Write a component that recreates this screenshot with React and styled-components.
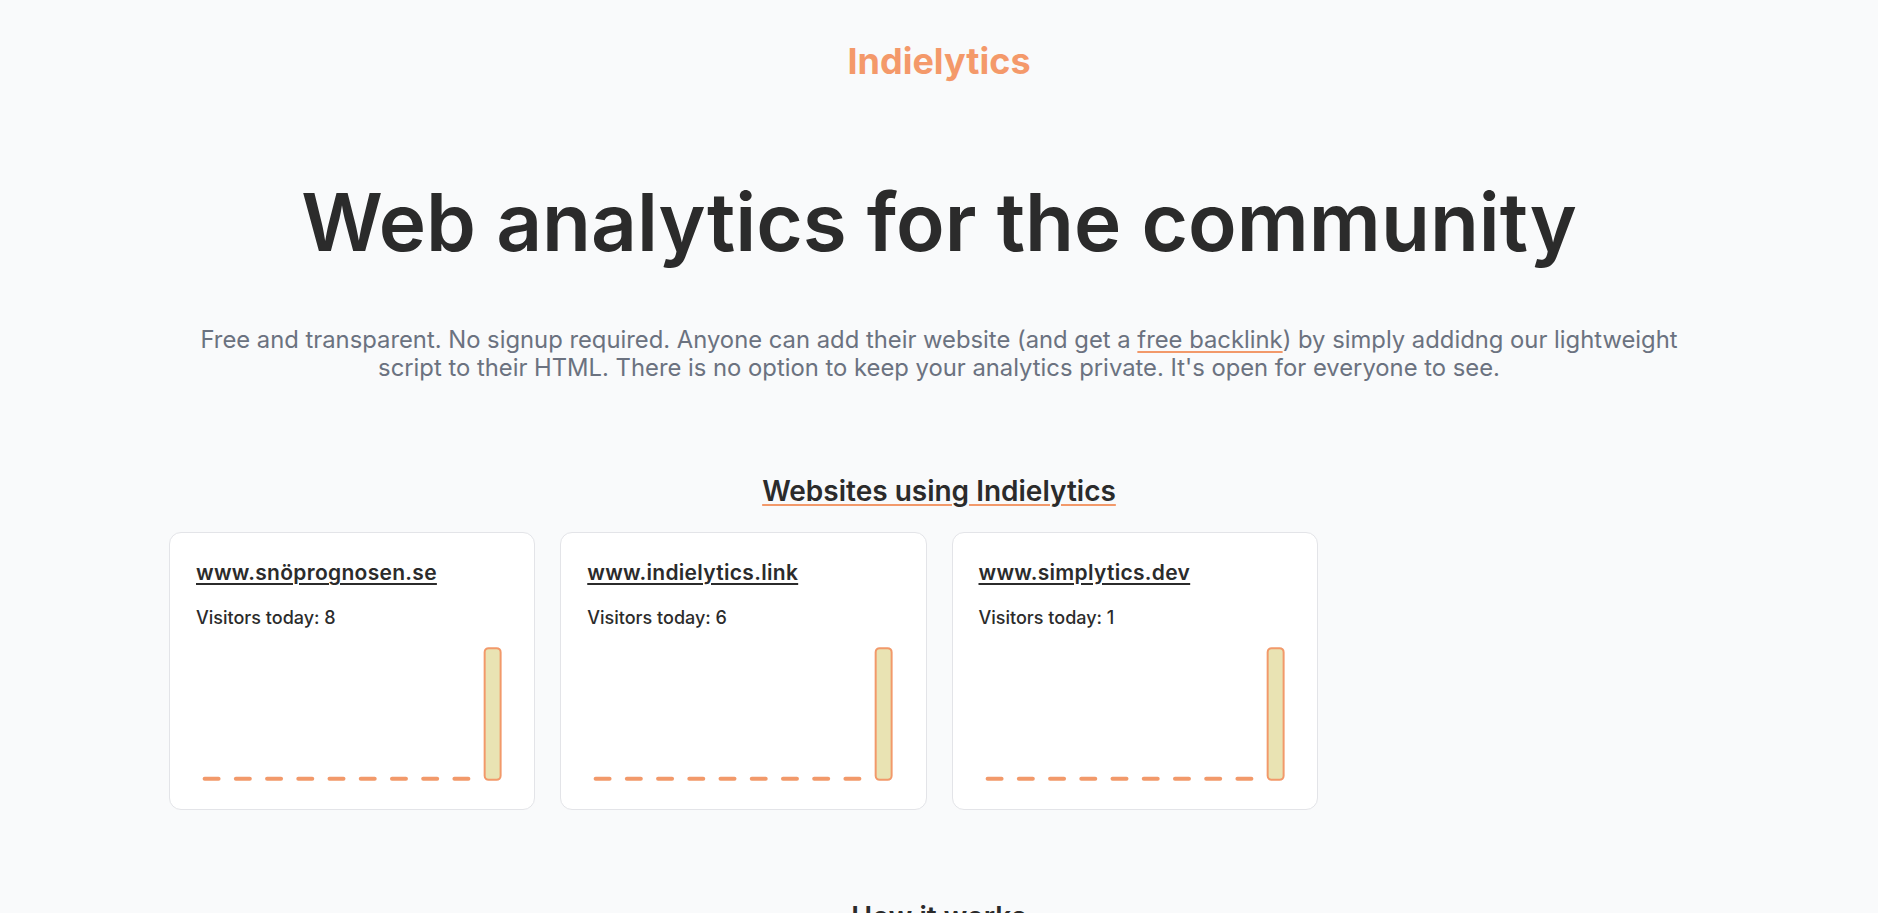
import React from 'react'
import styled, { createGlobalStyle } from 'styled-components'

const GlobalStyle = createGlobalStyle`
    * { box-sizing: border-box; }
    body{
        margin: 0;
        background: #f9fafb;
        font-family: Inter, "Noto Sans", sans-serif;
        color: #2b2b2b;
    }
`;

const sites = [
    { url: 'www.snöprognosen.se', visitors: 8, days: [0, 0, 0, 0, 0, 0, 0, 0, 0, 8] },
    { url: 'www.indielytics.link', visitors: 6, days: [0, 0, 0, 0, 0, 0, 0, 0, 0, 6] },
    { url: 'www.simplytics.dev', visitors: 1, days: [0, 0, 0, 0, 0, 0, 0, 0, 0, 1] },
]

function BarChart({ data }) {
    const w = 313
    const h = 136
    const slot = w / data.length
    const barW = 16
    const max = Math.max(...data, 1)
    return (
        <ChartSvg viewBox={`0 0 ${w} ${h}`} width={w} height={h}>
            {data.map((v, i) => {
                const x = i * slot + (slot - barW) / 2
                if (v === 0) {
                    return <rect key={i} x={x - 1} y={h - 6} width={barW + 2} height={4} rx={2} fill="#f2996a" />
                }
                const bh = (v / max) * (h - 4)
                return (
                    <rect key={i} x={x} y={h - 3 - bh} width={barW} height={bh} rx={4}
                        fill="#e9e3b3" stroke="#f2996a" strokeWidth={2} />
                )
            })}
        </ChartSvg>
    )
}

function App() {
    return (
        <>
            <GlobalStyle />
            <Page>
                <Header>
                    <Logo>Indielytics</Logo>
                </Header>
                <Hero>
                    <h1>Web analytics for the community</h1>
                    <p>
                        Free and transparent. No signup required. Anyone can add their website (and get a <a href="#">free backlink</a>) by simply addidng our lightweight script to their HTML. There is no option to keep your analytics private. It's open for everyone to see.
                    </p>
                </Hero>
                <Section>
                    <SectionTitle>Websites using Indielytics</SectionTitle>
                    <CardGrid>
                        {sites.map(site => (
                            <Card key={site.url}>
                                <SiteLink href="#">{site.url}</SiteLink>
                                <Visitors>Visitors today: {site.visitors}</Visitors>
                                <BarChart data={site.days} />
                            </Card>
                        ))}
                    </CardGrid>
                </Section>
                <Section>
                    <SectionTitle $plain>How it works</SectionTitle>
                </Section>
            </Page>
        </>
    )
}

const Page = styled.div`
    max-width: 1540px;
    margin: 0 auto;
    padding-bottom: 80px;
`;

const Header = styled.header`
    display: flex;
    justify-content: center;
    padding-top: 41px;
`;

const Logo = styled.div`
    font-size: 36px;
    line-height: 40px;
    font-weight: 700;
    color: #f4996a;
`;

const Hero = styled.section`
    text-align: center;
    h1{
        margin: 101px 0 0;
        font-size: 80px;
        line-height: 80px;
        font-weight: 600;
        color: #2b2b2b;
    }
    p{
        margin: 64px auto 0;
        max-width: 1500px;
        font-size: 23.8px;
        line-height: 28px;
        color: #6b7280;
        a{
            color: inherit;
            text-decoration: underline;
            text-decoration-color: #f2996a;
            text-decoration-thickness: 2px;
            text-underline-offset: 3px;
        }
    }
`;

const Section = styled.section`
    margin-top: 91px;
    & + &{
        margin-top: 89px;
    }
`;

const SectionTitle = styled.h2`
    margin: 0 0 23px;
    text-align: center;
    font-size: 28px;
    line-height: 36px;
    font-weight: 600;
    color: #2b2b2b;
    text-decoration: ${p => p.$plain ? 'none' : 'underline'};
    text-decoration-color: #f2996a;
    text-decoration-thickness: 2px;
    text-underline-offset: 3px;
`;

const CardGrid = styled.div`
    display: grid;
    grid-template-columns: repeat(4, 1fr);
    gap: 25px;
`;

const Card = styled.div`
    display: flex;
    flex-direction: column;
    background: #ffffff;
    border: 1px solid #e3e4e8;
    border-radius: 12px;
    padding: 26px;
`;

const SiteLink = styled.a`
    align-self: flex-start;
    font-size: 21px;
    line-height: 28px;
    font-weight: 600;
    letter-spacing: 0.3px;
    color: #2b2b2b;
    text-decoration: underline;
    text-decoration-thickness: 2px;
    text-underline-offset: 3px;
`;

const Visitors = styled.div`
    margin-top: 19px;
    font-size: 18px;
    line-height: 24px;
    font-weight: 500;
    color: #2b2b2b;
`;

const ChartSvg = styled.svg`
    display: block;
    margin-top: 17px;
    width: 100%;
    height: 136px;
    overflow: visible;
`;

export default App
